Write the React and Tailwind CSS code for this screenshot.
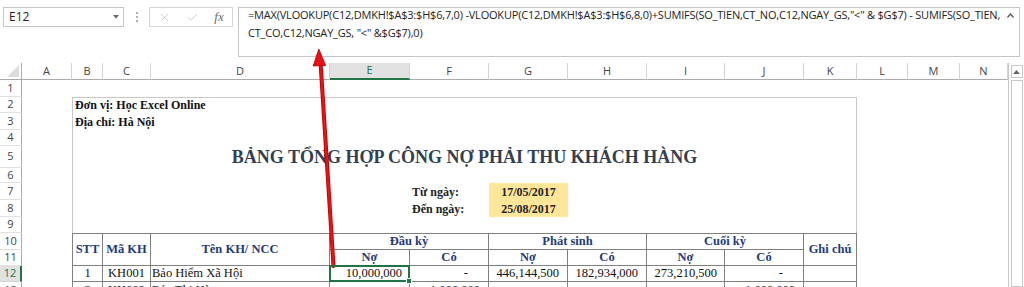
import React from "react";
import { X, Check } from "lucide-react";

const SERIF = "font-['Liberation_Serif','Times_New_Roman',serif]";
const UI = "font-['Open_Sans','Noto_Sans',sans-serif]";

const colHeads = [
  ["A", "w-[50px]"],
  ["B", "w-[31px]"],
  ["C", "w-[48px]"],
  ["D", "w-[179px]"],
  ["E", "w-[80px]"],
  ["F", "w-[79px]"],
  ["G", "w-[79px]"],
  ["H", "w-[79px]"],
  ["I", "w-[78px]"],
  ["J", "w-[79px]"],
  ["K", "w-[53px]"],
  ["L", "w-[51px]"],
  ["M", "w-[52px]"],
  ["N", "w-[48px]"],
];

const rowHeads = [
  ["1", "h-[17px]"],
  ["2", "h-[16px]"],
  ["3", "h-[17px]"],
  ["4", "h-[16px]"],
  ["5", "h-[22px]"],
  ["6", "h-[15px]"],
  ["7", "h-[17px]"],
  ["8", "h-[17px]"],
  ["9", "h-[16px]"],
  ["10", "h-[17px]"],
  ["11", "h-[16px]"],
  ["12", "h-[16px]"],
  ["13", "h-[17px]"],
];

const TH =
  "flex items-center justify-center border-r border-b border-[#808080] text-[#1f3a7a] font-bold text-[12.5px] leading-none";
const TD = "flex items-center border-r border-b border-[#808080] text-[12.5px] text-[#111] leading-none whitespace-nowrap";

function FormulaBar() {
  return (
    <div className={`relative h-[63px] flex items-start pt-[7px] pl-[3px] ${UI}`}>
      <div className="w-[121px] h-[20px] border border-[#c6c6c6] flex items-center justify-between pl-[5px] pr-[4px] text-[12px] text-[#222]">
        <span>E12</span>
        <svg width="6" height="4" viewBox="0 0 6 4">
          <path d="M0 0 L6 0 L3 3.5 Z" fill="#666" />
        </svg>
      </div>
      <div className="w-[25px] h-[20px] flex flex-col items-center justify-center gap-[2px]">
        <div className="w-[2px] h-[2px] bg-[#b0b0b0]" />
        <div className="w-[2px] h-[2px] bg-[#b0b0b0]" />
        <div className="w-[2px] h-[2px] bg-[#b0b0b0]" />
      </div>
      <div className="w-[84px] h-[20px] border border-[#d6d6d6] flex items-center">
        <div className="w-[28px] flex justify-center">
          <X size={13} strokeWidth={1.2} color="#b5b5b5" />
        </div>
        <div className="w-[28px] flex justify-center">
          <Check size={13} strokeWidth={1.2} color="#b5b5b5" />
        </div>
        <div className={`w-[26px] flex justify-center italic text-[13px] text-[#6a6a6a] ${SERIF}`}>fx</div>
      </div>
      <div className="ml-[5px] w-[782px] h-[50px] border border-[#c6c6c6] pl-[9px] relative">
        <div className="-mt-[2px] text-[11px] leading-[18px] text-[#222] whitespace-pre tracking-[-0.2px]">
          <div>{'=MAX(VLOOKUP(C12,DMKH!$A$3:$H$6,7,0) -VLOOKUP(C12,DMKH!$A$3:$H$6,8,0)+SUMIFS(SO_TIEN,CT_NO,C12,NGAY_GS,"<" & $G$7) - SUMIFS(SO_TIEN,'}</div>
          <div>{'CT_CO,C12,NGAY_GS, "<" &$G$7),0)'}</div>
        </div>
        <div className="absolute right-[5px] top-[5px]">
          <svg width="7" height="5" viewBox="0 0 7 5">
            <path d="M0.5 4.5 L3.5 1 L6.5 4.5" fill="none" stroke="#555" strokeWidth="1.2" />
          </svg>
        </div>
      </div>
    </div>
  );
}

function ColumnHeader() {
  return (
    <div className={`flex h-[17px] ${UI} text-[11px] text-[#444]`}>
      <div className="w-[22px] h-full border-r border-b border-[#ababab] flex items-end justify-end pr-[2px] pb-[2px]">
        <svg width="12" height="12" viewBox="0 0 12 12">
          <path d="M12 0 L12 12 L0 12 Z" fill="#dcdcdc" />
        </svg>
      </div>
      {colHeads.map(([l, w]) =>
        l === "E" ? (
          <div
            key={l}
            className={`${w} h-full bg-[#e1e1e1] border-r border-[#d4d4d4] border-b-2 border-b-[#217346] flex items-center justify-center text-[#217346]`}
          >
            {l}
          </div>
        ) : (
          <div key={l} className={`${w} h-full border-r border-b border-[#d4d4d4] border-b-[#ababab] flex items-center justify-center`}>
            {l}
          </div>
        )
      )}
    </div>
  );
}

function RowHeader() {
  return (
    <div className={`w-[22px] shrink-0 flex flex-col ${UI} text-[11px] text-[#444]`}>
      {rowHeads.map(([n, h]) =>
        n === "12" ? (
          <div
            key={n}
            className={`${h} bg-[#e1e1e1] border-b border-[#d4d4d4] border-r-2 border-r-[#217346] flex items-center justify-center text-[#217346]`}
          >
            {n}
          </div>
        ) : (
          <div key={n} className={`${h} border-b border-[#e1e1e1] border-r border-r-[#ababab] flex items-center justify-center`}>
            {n}
          </div>
        )
      )}
    </div>
  );
}

function Sheet() {
  return (
    <div
      className={`grid grid-cols-[50px_31px_48px_179px_80px_79px_79px_79px_78px_79px_53px_51px_52px_48px] grid-rows-[17px_16px_17px_16px_22px_15px_17px_17px_16px_17px_16px_16px_17px] ${SERIF}`}
    >
      {/* outer light frame */}
      <div className="col-start-2 col-span-10 row-start-2 row-span-12 border-l border-t border-r border-[#c8c8c8]" />

      <div className="col-start-2 col-span-4 row-start-2 pl-[3px] flex items-center text-[12px] font-bold text-[#111] whitespace-nowrap">
        Đơn vị: Học Excel Online
      </div>
      <div className="col-start-2 col-span-4 row-start-3 pl-[3px] flex items-center text-[12px] font-bold text-[#111] whitespace-nowrap">
        Địa chỉ: Hà Nội
      </div>

      <div className="col-start-2 col-span-10 row-start-5 flex items-center justify-center text-[18px] font-bold text-[#333f50] whitespace-nowrap">
        BẢNG TỔNG HỢP CÔNG NỢ PHẢI THU KHÁCH HÀNG
      </div>

      <div className="col-start-6 row-start-7 pl-[2px] flex items-center text-[12px] font-bold text-[#222] whitespace-nowrap">
        Từ ngày:
      </div>
      <div className="col-start-7 row-start-7 bg-[#ffe699] flex items-center justify-center text-[12px] font-bold text-[#222]">
        17/05/2017
      </div>
      <div className="col-start-6 row-start-8 pl-[2px] flex items-center text-[12px] font-bold text-[#222] whitespace-nowrap">
        Đến ngày:
      </div>
      <div className="col-start-7 row-start-8 bg-[#ffe699] flex items-center justify-center text-[12px] font-bold text-[#222]">
        25/08/2017
      </div>

      {/* table header */}
      <div className={`${TH} col-start-2 row-start-10 row-span-2 border-l border-t`}>STT</div>
      <div className={`${TH} col-start-3 row-start-10 row-span-2 border-t`}>Mã KH</div>
      <div className={`${TH} col-start-4 row-start-10 row-span-2 border-t`}>Tên KH/ NCC</div>
      <div className={`${TH} col-start-5 col-span-2 row-start-10 border-t`}>Đầu kỳ</div>
      <div className={`${TH} col-start-7 col-span-2 row-start-10 border-t`}>Phát sinh</div>
      <div className={`${TH} col-start-9 col-span-2 row-start-10 border-t`}>Cuối kỳ</div>
      <div className={`${TH} col-start-11 row-start-10 row-span-2 border-t`}>Ghi chú</div>
      <div className={`${TH} col-start-5 row-start-11`}>Nợ</div>
      <div className={`${TH} col-start-6 row-start-11`}>Có</div>
      <div className={`${TH} col-start-7 row-start-11`}>Nợ</div>
      <div className={`${TH} col-start-8 row-start-11`}>Có</div>
      <div className={`${TH} col-start-9 row-start-11`}>Nợ</div>
      <div className={`${TH} col-start-10 row-start-11`}>Có</div>

      {/* row 12 */}
      <div className={`${TD} col-start-2 row-start-12 border-l justify-center`}>1</div>
      <div className={`${TD} col-start-3 row-start-12 justify-center`}>KH001</div>
      <div className={`${TD} col-start-4 row-start-12 pl-[1px]`}>Bảo Hiểm Xã Hội</div>
      <div className={`${TD} col-start-5 row-start-12 justify-end pr-[7px] relative`}>
        10,000,000
        <div className="absolute -left-[1px] -top-[1px] -right-[1px] -bottom-[1px] border-2 border-[#217346] z-10" />
        <div className="absolute -right-[3px] -bottom-[3px] w-[6px] h-[6px] bg-[#217346] border border-white z-20" />
      </div>
      <div className={`${TD} col-start-6 row-start-12 justify-end pr-[20px]`}>-</div>
      <div className={`${TD} col-start-7 row-start-12 justify-end pr-[8px]`}>446,144,500</div>
      <div className={`${TD} col-start-8 row-start-12 justify-end pr-[8px]`}>182,934,000</div>
      <div className={`${TD} col-start-9 row-start-12 justify-end pr-[7px]`}>273,210,500</div>
      <div className={`${TD} col-start-10 row-start-12 justify-end pr-[20px]`}>-</div>
      <div className={`${TD} col-start-11 row-start-12`} />

      {/* row 13 (partial) */}
      <div className={`${TD} col-start-2 row-start-13 border-l justify-center`}>2</div>
      <div className={`${TD} col-start-3 row-start-13 justify-center`}>KH002</div>
      <div className={`${TD} col-start-4 row-start-13 pl-[1px]`}>Bảo Thị Hà</div>
      <div className={`${TD} col-start-5 row-start-13 justify-end pr-[20px]`}>-</div>
      <div className={`${TD} col-start-6 row-start-13 justify-end pr-[8px]`}>1,000,000</div>
      <div className={`${TD} col-start-7 row-start-13 justify-end pr-[20px]`}>-</div>
      <div className={`${TD} col-start-8 row-start-13 justify-end pr-[20px]`}>-</div>
      <div className={`${TD} col-start-9 row-start-13 justify-end pr-[20px]`}>-</div>
      <div className={`${TD} col-start-10 row-start-13 justify-end pr-[8px]`}>1,000,000</div>
      <div className={`${TD} col-start-11 row-start-13`} />
    </div>
  );
}

function ScrollBar() {
  return (
    <div className="w-[16px] shrink-0 border-l border-[#c8c8c8] flex flex-col items-center pt-[2px]">
      <div className="w-[12px] h-[13px] border border-[#c8c8c8] flex items-center justify-center">
        <svg width="7" height="4" viewBox="0 0 7 4">
          <path d="M0 4 L3.5 0 L7 4 Z" fill="#666" />
        </svg>
      </div>
      <div className="mt-[2px] w-[12px] flex-1 border border-[#c8c8c8]" />
    </div>
  );
}

export default function App() {
  return (
    <div className="relative w-[1024px] h-[287px] overflow-hidden bg-white">
      <FormulaBar />
      <div className="flex h-[224px]">
        <div className="w-[1008px] shrink-0">
          <ColumnHeader />
          <div className="flex">
            <RowHeader />
            <Sheet />
          </div>
        </div>
        <ScrollBar />
      </div>
      <svg className="absolute left-0 top-0 pointer-events-none" width="1024" height="287" viewBox="0 0 1024 287">
        <line x1="333.5" y1="266" x2="320.5" y2="62" stroke="#b00000" strokeWidth="4" strokeLinecap="round" />
        <line x1="333.5" y1="266" x2="320.5" y2="62" stroke="#f01010" strokeWidth="2.4" strokeLinecap="round" />
        <path d="M318.8 49 L313.2 66 L325.6 65.4 Z" fill="#e81010" stroke="#b00000" strokeWidth="0.8" strokeLinejoin="round" />
      </svg>
    </div>
  );
}
